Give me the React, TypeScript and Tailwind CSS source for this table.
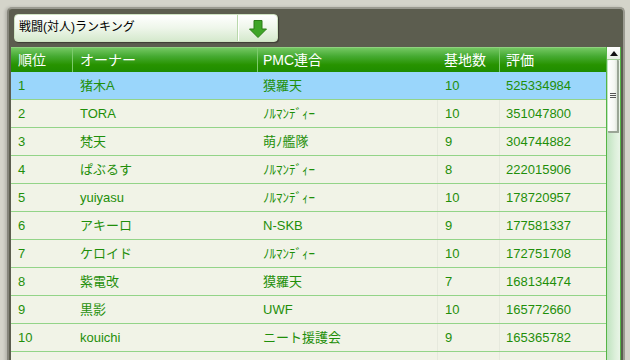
import React from "react";

const rows: [string, string, string, string, string][] = [
  ["1", "猪木A", "獏羅天", "10", "525334984"],
  ["2", "TORA", "ﾉﾙﾏﾝﾃﾞｨｰ", "10", "351047800"],
  ["3", "梵天", "萌ﾉ艦隊", "9", "304744882"],
  ["4", "ぱぶるす", "ﾉﾙﾏﾝﾃﾞｨｰ", "8", "222015906"],
  ["5", "yuiyasu", "ﾉﾙﾏﾝﾃﾞｨｰ", "10", "178720957"],
  ["6", "アキーロ", "N-SKB", "9", "177581337"],
  ["7", "ケロイド", "ﾉﾙﾏﾝﾃﾞｨｰ", "10", "172751708"],
  ["8", "紫電改", "獏羅天", "7", "168134474"],
  ["9", "黒影", "UWF", "10", "165772660"],
  ["10", "kouichi", "ニート援護会", "9", "165365782"],
  ["11", "kidd", "巛国", "9", "164221903"],
];

function DownArrow() {
  return (
    <svg width="20" height="20" viewBox="0 0 20 20">
      <path
        d="M6 1.5 H14 V10 H18.5 L10 18.5 L1.5 10 H6 Z"
        fill="#3ea527"
        stroke="#2b7d17"
        strokeWidth="1"
        strokeLinejoin="round"
      />
    </svg>
  );
}

export default function App() {
  return (
    <div className="w-[630px] h-[360px] overflow-hidden bg-[#d4d4ca] pl-[7px] pt-[7px] font-['Liberation_Sans','Noto_Sans_CJK_JP',sans-serif]">
      <div className="w-[618px] h-[420px] rounded-t-[5px] border-2 border-b-0 border-l-[#85857b] border-t-[#9a9a90] border-r-[#9a9a90] bg-[#5c5d4f] pl-[2px] pr-[2px] pt-[5px] flex flex-col shadow-[-2px_0_3px_rgba(0,0,0,0.15)]">
        {/* dropdown */}
        <div className="ml-[3px] w-[264px] h-[28px] rounded-[4px] border border-[#cfe3c2] bg-[linear-gradient(#ffffff,#eef6ea_50%,#d5e9cd)] flex shadow-[1px_1px_1px_rgba(0,0,0,0.35)]">
          <div className="flex-1 flex items-center pl-[4px] pb-[3px] text-[12px] text-black leading-none">
            戦闘(対人)ランキング
          </div>
          <div className="w-[2px] h-full bg-[#b9d8ab] border-r border-white" />
          <div className="w-[38px] h-full flex items-center justify-center pt-[1px]">
            <DownArrow />
          </div>
        </div>

        {/* table + scrollbar */}
        <div className="mt-[5px] flex">
          <div className="w-[595px] flex flex-col">
            <div className="grid grid-cols-[61px_185px_180px_62px_107px] h-[25px] bg-[linear-gradient(#74c763,#45aa31_35%,#279300_70%,#1f8c00)] border-t border-[#8fd27f] text-white text-[14px] leading-none">
              <div className="flex items-center pl-[7px]">順位</div>
              <div className="flex items-center pl-[7px] border-l border-[#7ccb6c]">オーナー</div>
              <div className="flex items-center pl-[5px] border-l border-[#7ccb6c]">PMC連合</div>
              <div className="flex items-center pl-[7px]">基地数</div>
              <div className="flex items-center pl-[6px] border-l border-[#7ccb6c]">評価</div>
            </div>
            {rows.map((r, i) => (
              <div
                key={i}
                className={
                  i === 0
                    ? "grid grid-cols-[61px_185px_180px_62px_107px] h-[28px] border-b border-[#93d488] bg-[#9ad6fb] text-[#1f8f0a] text-[13px] leading-none"
                    : "grid grid-cols-[61px_185px_180px_62px_107px] h-[28px] border-b border-[#93d488] bg-[#f1f3e7] text-[#1f8f0a] text-[13px] leading-none"
                }
              >
                <div className="flex items-center pl-[7px]">{r[0]}</div>
                <div className="flex items-center pl-[8px]">{r[1]}</div>
                <div className="flex items-center pl-[6px]">{r[2]}</div>
                <div className={i === 0 ? "flex items-center pl-[7px] border-l border-transparent" : "flex items-center pl-[7px] border-l border-[#e6e9dd]"}>{r[3]}</div>
                <div className={i === 0 ? "flex items-center pl-[6px] border-l border-transparent" : "flex items-center pl-[6px] border-l border-[#e6e9dd]"}>{r[4]}</div>
              </div>
            ))}
          </div>

          {/* scrollbar */}
          <div className="w-[15px] h-[330px] flex flex-col border-l border-r border-[#55b546] bg-[linear-gradient(90deg,#bfe3bf,#dbefd9_60%,#e9f5e7)]">
            <div className="h-[13px] bg-[linear-gradient(#ffffff,#e6efe2)] border-b border-[#9fcf94] flex items-center justify-center">
              <svg width="8" height="5" viewBox="0 0 8 5">
                <path d="M0 5 L4 0 L8 5 Z" fill="#111" />
              </svg>
            </div>
            <div className="h-[73px] ml-[1px] mr-[1px] rounded-[1px] bg-[linear-gradient(90deg,#ffffff,#f4f7f2_70%,#dfe6dc)] border-r-2 border-b-2 border-[#9aa596] flex items-center justify-center">
              <div className="flex flex-col gap-[1px]">
                <div className="w-[6px] h-[1px] bg-[#555]" />
                <div className="w-[6px] h-[1px] bg-[#555]" />
                <div className="w-[6px] h-[1px] bg-[#555]" />
              </div>
            </div>
            <div className="flex-1" />
          </div>
        </div>
      </div>
    </div>
  );
}
